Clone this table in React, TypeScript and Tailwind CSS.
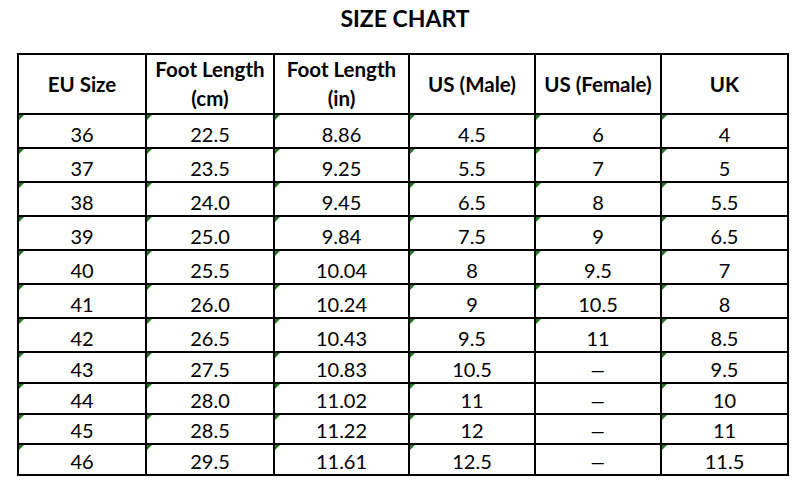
import React from "react";

const rows: string[][] = [
  ["36", "22.5", "8.86", "4.5", "6", "4"],
  ["37", "23.5", "9.25", "5.5", "7", "5"],
  ["38", "24.0", "9.45", "6.5", "8", "5.5"],
  ["39", "25.0", "9.84", "7.5", "9", "6.5"],
  ["40", "25.5", "10.04", "8", "9.5", "7"],
  ["41", "26.0", "10.24", "9", "10.5", "8"],
  ["42", "26.5", "10.43", "9.5", "11", "8.5"],
  ["43", "27.5", "10.83", "10.5", "–", "9.5"],
  ["44", "28.0", "11.02", "11", "–", "10"],
  ["45", "28.5", "11.22", "12", "–", "11"],
  ["46", "29.5", "11.61", "12.5", "–", "11.5"],
];

const headers: string[][] = [
  ["EU Size"],
  ["Foot Length", "(cm)"],
  ["Foot Length", "(in)"],
  ["US (Male)"],
  ["US (Female)"],
  ["UK"],
];

function Cell({ text }: { text: string }) {
  const isDash = text === "–";
  return (
    <div className="relative bg-white flex items-end justify-center pb-[1px]">
      {!isDash && (
        <span className="absolute left-0 top-0 w-0 h-0 border-t-[5px] border-r-[5px] border-t-[#1f7a1f] border-r-transparent" />
      )}
      {isDash ? (
        <span className="leading-[24px] inline-block scale-x-150">{text}</span>
      ) : (
        <span className="leading-[24px]">{text}</span>
      )}
    </div>
  );
}

export default function App() {
  return (
    <div
      className="w-[810px] h-[496px] bg-white text-black"
      style={{ fontFamily: "Lato, 'Open Sans', sans-serif" }}
    >
      <div className="h-[53px] pt-[8px] text-center font-bold text-[23px] leading-[21px]">
        SIZE CHART
      </div>
      <div className="ml-[17px] w-[772px] bg-black p-[2px] grid gap-[2px] grid-cols-[126px_126px_133px_124px_124px_125px] grid-rows-[58px_32px_32px_32px_32px_32px_32px_32px_29px_29px_28px_29px] text-[20px]">
        {headers.map((h, i) => (
          <div
            key={"h" + i}
            className="bg-white flex flex-col items-center justify-center font-bold leading-[29px] text-[20.5px]"
          >
            {h.map((line, j) => (
              <span key={j}>{line}</span>
            ))}
          </div>
        ))}
        {rows.map((r, ri) =>
          r.map((c, ci) => <Cell key={ri + "-" + ci} text={c} />)
        )}
      </div>
    </div>
  );
}
